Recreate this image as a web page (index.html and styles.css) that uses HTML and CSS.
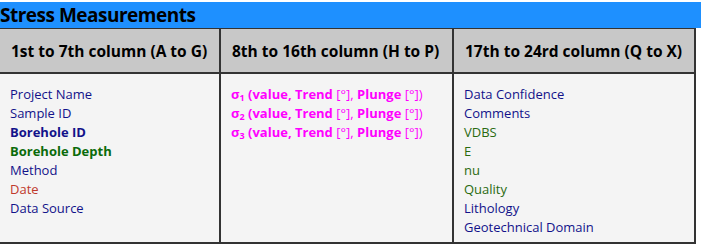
FILE: index.html
```html
<!DOCTYPE html>
<html>
<head>
<meta charset="utf-8">
<link rel="stylesheet" href="styles.css">
</head>
<body>
<h2 class="title">Stress Measurements</h2>
<div class="grid">
  <div class="hcell">1st to 7th column (A to G)</div>
  <div class="hcell">8th to 16th column (H to P)</div>
  <div class="hcell last">17th to 24rd column (Q to X)</div>
  <div class="cell">
    <div class="navy">Project Name</div>
    <div class="navy">Sample ID</div>
    <div class="navy b">Borehole ID</div>
    <div class="green b">Borehole Depth</div>
    <div class="navy">Method</div>
    <div class="red">Date</div>
    <div class="navy">Data Source</div>
  </div>
  <div class="cell">
    <div class="mag"><b>σ<sub>1</sub> (value, Trend</b> [°], <b>Plunge</b> [°])</div>
    <div class="mag"><b>σ<sub>2</sub> (value, Trend</b> [°], <b>Plunge</b> [°])</div>
    <div class="mag"><b>σ<sub>3</sub> (value, Trend</b> [°], <b>Plunge</b> [°])</div>
  </div>
  <div class="cell last">
    <div class="navy">Data Confidence</div>
    <div class="navy">Comments</div>
    <div class="olive">VDBS</div>
    <div class="olive">E</div>
    <div class="olive">nu</div>
    <div class="olive">Quality</div>
    <div class="navy">Lithology</div>
    <div class="navy">Geotechnical Domain</div>
  </div>
</div>
</body>
</html>
```
FILE: styles.css
```css
html, body {
  margin: 0;
  padding: 0;
  background: #ffffff;
  font-family: "Open Sans", "Noto Sans", sans-serif;
}
.title {
  margin: 2px 0 0 0;
  height: 26px;
  line-height: 26px;
  background: #1e90ff;
  color: #000;
  font-size: 19px;
  font-weight: 700;
  letter-spacing: -0.5px;
}
.grid {
  width: 696px;
  box-sizing: border-box;
  display: grid;
  grid-template-columns: 221px 233px 240px;
  border-top: 1px solid #333;
  border-right: 2px solid #333;
  border-bottom: 2px solid #333;
}
.hcell {
  background: #c8c8c8;
  height: 43px;
  border-right: 2px solid #333;
  border-bottom: 2px solid #333;
  padding: 0 0 0 11px;
  display: flex;
  align-items: center;
  font-size: 15.5px;
  font-weight: 700;
  color: #000;
}
.cell {
  background: #f4f4f4;
  height: 168px;
  border-right: 2px solid #333;
  padding: 11px 0 0 10px;
  font-size: 13px;
  line-height: 19px;
  box-sizing: border-box;
}
.hcell.last, .cell.last { border-right: none; }
.navy { color: #12128a; }
.green { color: #0a6b0a; }
.olive { color: #2a6a10; }
.red { color: #c0392b; }
.mag { color: #ff00ff; }
.b { font-weight: 700; }
sub {
  font-size: 9px;
  vertical-align: -2px;
  line-height: 0;
}
```
